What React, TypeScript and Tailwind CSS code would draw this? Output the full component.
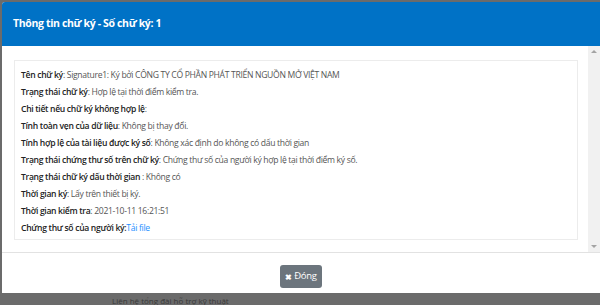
const rows: { label: string; value: string; link?: boolean }[] = [
  { label: "Tên chữ ký", value: ": Signature1: Ký bởi CÔNG TY CỔ PHẦN PHÁT TRIỂN NGUỒN MỞ VIỆT NAM" },
  { label: "Trạng thái chữ ký", value: ": Hợp lệ tại thời điểm kiểm tra." },
  { label: "Chi tiết nếu chữ ký không hợp lệ", value: ":" },
  { label: "Tính toàn vẹn của dữ liệu", value: ": Không bị thay đổi." },
  { label: "Tính hợp lệ của tài liệu được ký số", value: ": Không xác định do không có dấu thời gian" },
  { label: "Trạng thái chứng thư số trên chữ ký", value: ": Chứng thư số của người ký hợp lệ tại thời điểm ký số." },
  { label: "Trạng thái chữ ký dấu thời gian ", value: ": Không có" },
  { label: "Thời gian ký", value: ": Lấy trên thiết bị ký." },
  { label: "Thời gian kiểm tra", value: ": 2021-10-11 16:21:51" },
  { label: "Chứng thư số của người ký", value: "Tải file", link: true },
];

export default function App() {
  return (
    <div
      className="w-[600px] h-[305px] overflow-hidden bg-[#6b6b6b] pt-[2px] pl-[2px] flex flex-col"
      style={{ fontFamily: '"Open Sans", "Noto Sans", sans-serif' }}
    >
      <div className="flex flex-col bg-white rounded-tl-[3px] h-[293px]">
        <div className="h-[44px] bg-[#0072c6] rounded-tl-[3px] flex items-center px-[11px]">
          <h1 className="text-white text-[10.5px] font-bold tracking-[-0.35px]">Thông tin chữ ký - Số chữ ký: 1</h1>
        </div>
        <div className="flex h-[207px] border-b border-[#e2e2e2]">
          <div className="flex-1 pt-[14px] pl-[12px] pr-[10px]">
            <div className="border border-[#ececec] h-[180px] pt-[6px] pl-[6px] flex flex-col text-[8.6px] leading-[17px] tracking-[-0.32px]">
              {rows.map((r) => (
                <div key={r.label} className="whitespace-nowrap">
                  <span className="font-semibold text-[#222]">{r.label}</span>
                  {r.link ? (
                    <>
                      <span className="font-semibold text-[#222]">:</span>
                      <span className="text-[#1e90ff]">{r.value}</span>
                    </>
                  ) : (
                    <span className="text-[#555]">{r.value}</span>
                  )}
                </div>
              ))}
            </div>
          </div>
          <div className="w-[12px] bg-[#f1f1f1] flex flex-col justify-between items-center py-[4px]">
            <span className="block w-0 h-0 border-l-[3px] border-r-[3px] border-b-[3px] border-l-transparent border-r-transparent border-b-[#a3a3a3]" />
            <span className="block w-0 h-0 border-l-[3px] border-r-[3px] border-t-[3px] border-l-transparent border-r-transparent border-t-[#a3a3a3]" />
          </div>
        </div>
        <div className="flex-1 flex justify-center items-start pt-[12px]">
          <button className="h-[23px] px-[5px] bg-[#6c757d] text-white rounded-[3px] flex items-center gap-[2px] text-[9.5px] tracking-[-0.3px]">
            <span className="text-[8px] font-bold">✖</span>
            Đóng
          </button>
        </div>
      </div>
      <div className="flex-1 text-[8px] text-[#3a3a3a] pl-[110px] leading-[8px] pt-[4px] whitespace-nowrap">
        Liên hệ tổng đài hỗ trợ kỹ thuật
      </div>
    </div>
  );
}
